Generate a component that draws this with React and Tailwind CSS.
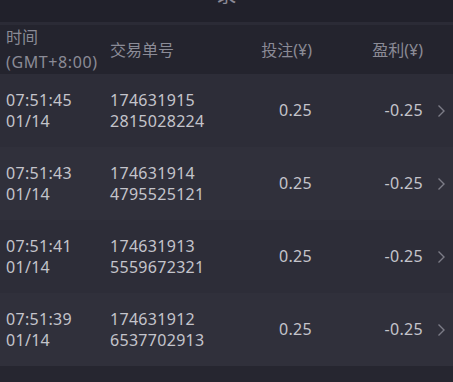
import React from "react";

const rows = [
  { t: "07:51:45", d: "01/14", a: "174631915", b: "2815028224" },
  { t: "07:51:43", d: "01/14", a: "174631914", b: "4795525121" },
  { t: "07:51:41", d: "01/14", a: "174631913", b: "5559672321" },
  { t: "07:51:39", d: "01/14", a: "174631912", b: "6537702913" },
];

const font = { fontFamily: '"Noto Sans", "Noto Sans CJK SC", sans-serif' };

function Chevron() {
  return (
    <svg width="9" height="14" viewBox="0 0 9 14" fill="none">
      <path d="M1.5 1.5 L7 7 L1.5 12.5" stroke="#7c7c87" strokeWidth="1.4" />
    </svg>
  );
}

export default function App() {
  return (
    <div className="w-[453px] h-[382px] overflow-hidden bg-[#262630]" style={font}>
      <div className="h-[22px] bg-[#21212b] overflow-hidden flex justify-center">
        <div className="text-[20px] leading-[20px] mt-[-15px] text-[#8b8b96]">录</div>
      </div>
      <div className="h-[3px] bg-[#2b2b36]" />
      <div className="h-[49px] bg-[#24242e] flex items-center pl-[6px] text-[16px] text-[#8b8b96]">
        <div className="w-[104px] leading-[25px] whitespace-nowrap">
          <div>时间</div>
          <div className="tracking-[0.6px]">(GMT+8:00)</div>
        </div>
        <div className="w-[120px]">交易单号</div>
        <div className="w-[82px] text-right">投注(¥)</div>
        <div className="w-[111px] text-right">盈利(¥)</div>
      </div>
      {rows.map((r, i) => (
        <div
          key={i}
          className={`h-[73px] flex items-center pl-[6px] text-[16px] leading-[21px] tracking-[0.3px] text-[#c4c4cb] ${
            i % 2 === 0 ? "bg-[#2d2d38]" : "bg-[#30303b]"
          }`}
        >
          <div className="w-[104px] pt-[1px]">
            <div>{r.t}</div>
            <div>{r.d}</div>
          </div>
          <div className="w-[120px] pt-[1px]">
            <div>{r.a}</div>
            <div>{r.b}</div>
          </div>
          <div className="w-[82px] text-right">0.25</div>
          <div className="w-[111px] text-right">-0.25</div>
          <div className="ml-[14px] flex items-center">
            <Chevron />
          </div>
        </div>
      ))}
    </div>
  );
}
